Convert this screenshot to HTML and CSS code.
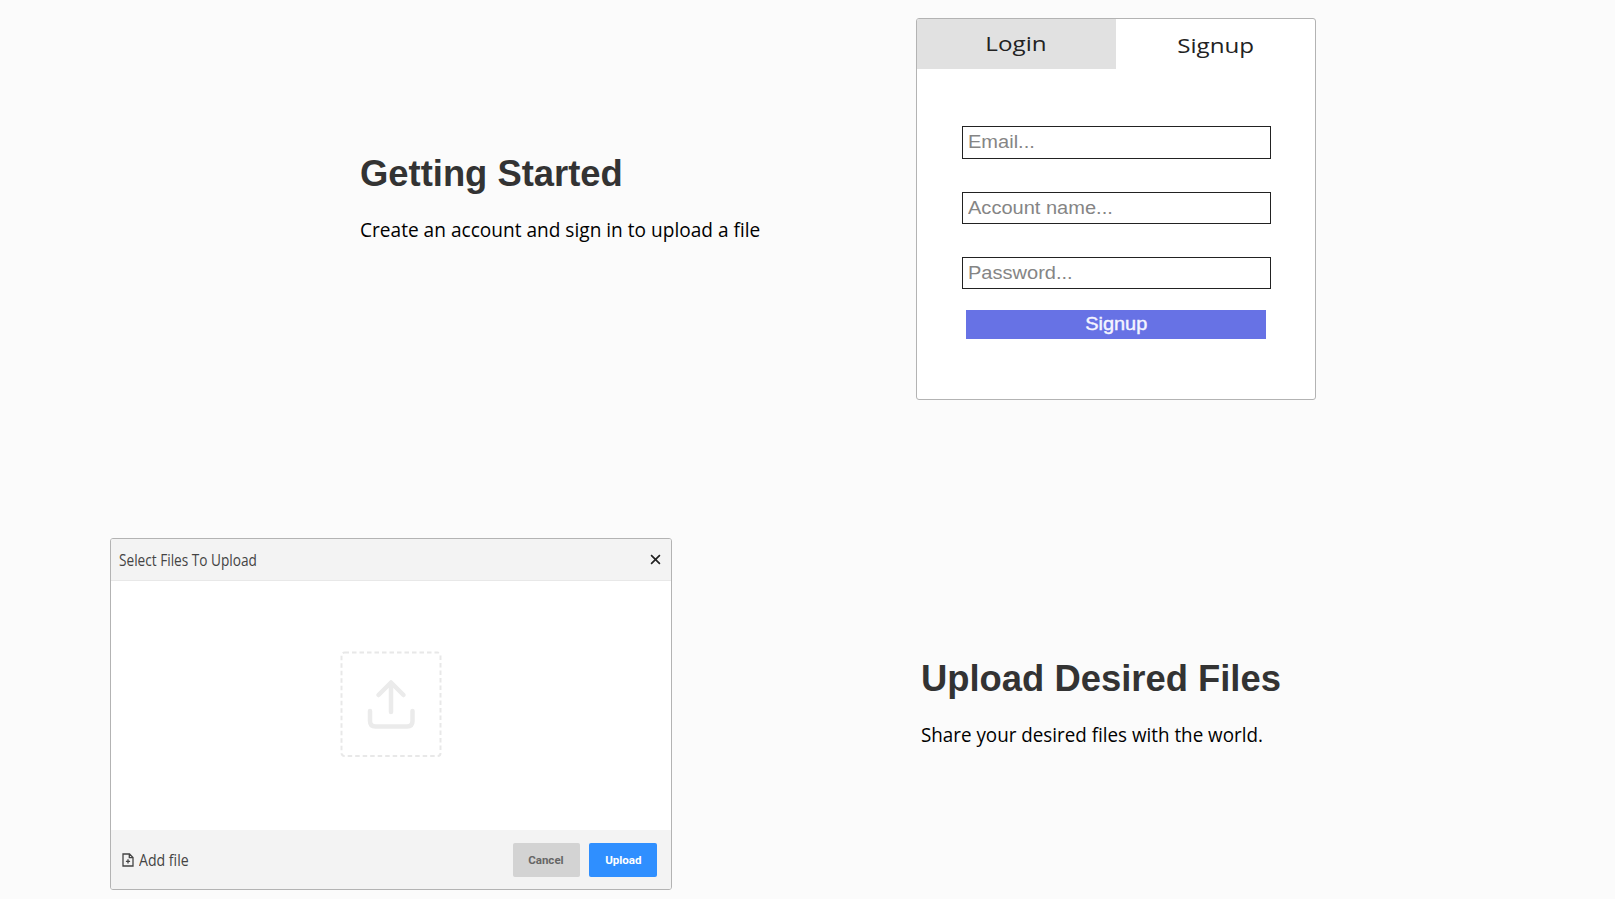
FILE: index.html
```html
<!DOCTYPE html>
<html lang="en">
<head>
<meta charset="utf-8">
<title>Getting Started</title>
<link rel="stylesheet" href="styles.css">
</head>
<body>
<main class="guide">
  <section class="step step-signup">
    <div class="copy">
      <h2>Getting Started</h2>
      <p><span class="line-create">Create an account and sign in to upload a file</span></p>
    </div>
    <div class="signup-card">
      <div class="tabs">
        <div class="tab tab-login"><span>Login</span></div>
        <div class="tab tab-signup"><span>Signup</span></div>
      </div>
      <div class="form">
        <div class="field"><span>Email...</span></div>
        <div class="field"><span>Account name...</span></div>
        <div class="field"><span>Password...</span></div>
        <div class="submit"><span>Signup</span></div>
      </div>
    </div>
  </section>
  <section class="step step-upload">
    <div class="dialog">
      <header class="dialog-head">
        <span class="dialog-title">Select Files To Upload</span>
        <svg class="close" viewBox="0 0 10 10"><path d="M1 1 9 9M9 1 1 9"/></svg>
      </header>
      <div class="drop">
        <svg class="dropzone" viewBox="0 0 102 107">
          <rect class="dash" x="1.5" y="1.5" width="99" height="103.500" rx="3"/>
          <path class="arrow" d="M51 61V32.500M38.500 44 51 31.500 63.500 44M30 60V70Q30 75.500 35.500 75.500H67Q72.500 75.500 72.500 70V60"/>
        </svg>
      </div>
      <footer class="dialog-foot">
        <svg class="file" viewBox="0 0 12 14"><path d="M1 1H7.500L11 4.500V13H1ZM7.300 1V4.700H11M6 6.200V10.400M3.900 8.300H8.100"/></svg>
        <span class="add">Add file</span>
        <div class="btn cancel"><span>Cancel</span></div>
        <div class="btn upload"><span>Upload</span></div>
      </footer>
    </div>
    <div class="copy">
      <h2>Upload Desired Files</h2>
      <p><span class="line-share">Share your desired files with the world.</span></p>
    </div>
  </section>
</main>
</body>
</html>
```
FILE: styles.css
```css
* { box-sizing: border-box; }
body { margin: 0; background: #fbfbfb; color: #000; font-family: "Open Sans", "Noto Sans", sans-serif; overflow: hidden; }
.guide { display: flex; flex-direction: column; gap: 138px; height: 899px; padding-top: 18px; }
.step { display: flex; align-items: flex-start; }
.step-signup { padding-left: 360px; }
.step-signup .copy { width: 556px; padding-top: 134px; }
.step-upload { padding-left: 110px; }
.step-upload .copy { margin-left: 249px; padding-top: 119px; }
h2 { margin: 0 0 20px; font: bold 36.4px/44px "Liberation Sans", Arial, sans-serif; color: #333; white-space: nowrap; }
p { margin: 0; font-size: 19.600px; line-height: 28px; white-space: nowrap; }
span { display: inline-block; white-space: nowrap; }
.line-create { transform-origin: left; transform: scaleX(.974); }
.line-share { transform-origin: left; transform: scaleX(.96); }

.signup-card { width: 400px; height: 382px; border: 1px solid #b3b3b3; border-radius: 3px; background: #fff; overflow: hidden; }
.tabs { display: flex; height: 50px; color: #222; font-size: 20.500px; line-height: 49px; }
.tab { width: 50%; text-align: center; }
.tab span { transform: scaleX(1.18); }
.tab-login { padding-right: 1px; background: #e1e1e1; }
.tab-signup { padding-top: 2px; }
.form { padding: 57px 44px 0 45px; font-family: "Liberation Sans", Arial, sans-serif; }
.field { height: 33px; margin-bottom: 33px; padding-left: 4.500px; border: 1px solid #222; color: #858585; font-size: 17.500px; line-height: 30px; }
.field:nth-child(2) { height: 32px; }
.field:nth-child(3) { height: 32px; margin-bottom: 21px; }
.field span { transform-origin: left; transform: scaleX(1.145); }
.submit { height: 29px; margin: 0 5px 0 4px; background: #6772e5; color: #f5f5ff; font-size: 17.500px; line-height: 28px; text-align: center; -webkit-text-stroke: .4px #f5f5ff; }
.submit span { transform: scaleX(1.14); }

.dialog { display: flex; flex-direction: column; width: 562px; height: 352px; border: 1px solid #b3b3b3; border-radius: 3px; background: #fff; overflow: hidden; }
.dialog-head { display: flex; align-items: center; justify-content: space-between; height: 42px; padding: 0 10.500px 0 8px; border-bottom: 1px solid #e8e8e8; background: #f3f3f3; }
.dialog-title { color: #444; font-size: 15.500px; transform-origin: left; transform: scaleX(.88); }
.close { width: 11px; height: 11px; fill: none; stroke: #222; stroke-width: 1.5; }
.drop { display: flex; flex: 1; align-items: flex-start; justify-content: center; padding-top: 70px; }
.dropzone { width: 102px; height: 107px; fill: none; }
.dash { stroke: #e8e8e8; stroke-width: 2; stroke-dasharray: 4.500 3; }
.arrow { stroke: #ebebeb; stroke-width: 4.500; stroke-linecap: round; stroke-linejoin: round; }
.dialog-foot { display: flex; align-items: center; height: 59px; padding: 0 14px 0 11px; background: #f3f3f3; }
.file { width: 12px; height: 14px; fill: none; stroke: #444; stroke-width: 1.3; }
.add { margin: 1px auto 0 5px; color: #444; font-size: 15.500px; transform-origin: left; transform: scaleX(.91); }
.btn { width: 67px; height: 34px; border-radius: 2px; font: bold 11px/35px Roboto, sans-serif; text-align: center; }
.btn span { transform: scaleX(1.05); }
.cancel { margin-right: 9px; padding-right: 1px; background: #d3d3d3; color: #666; }
.upload { width: 68px; background: #2f8fff; color: #fff; }
```
